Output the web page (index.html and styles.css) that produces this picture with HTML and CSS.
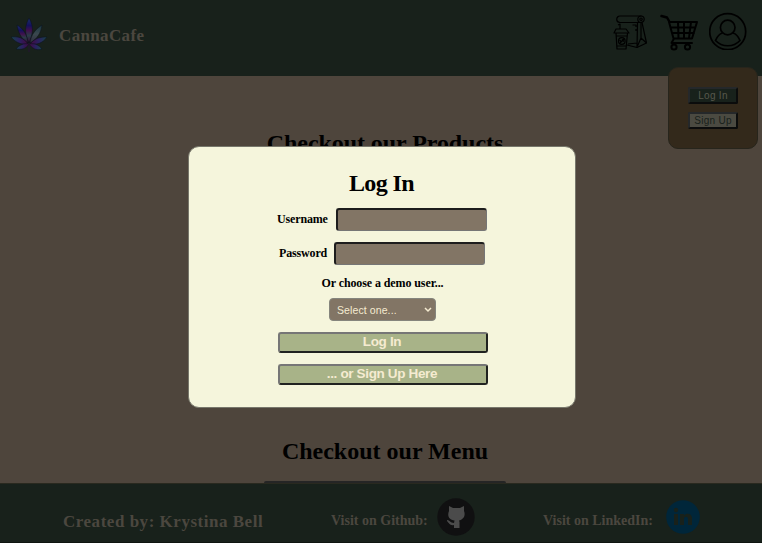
FILE: index.html
```html
<!DOCTYPE html>
<html lang="en">
<head>
<meta charset="utf-8">
<title>CannaCafe</title>
<link rel="stylesheet" href="styles.css">
</head>
<body>
<div class="page">
  <header class="header">
    <div class="brand">
      <svg class="leaf" viewBox="0 0 40 38" width="40" height="38">
        <defs>
          <linearGradient id="petal" x1="0" y1="0" x2="0" y2="1"><stop offset="0" stop-color="#1b2f67"/><stop offset=".3" stop-color="#14115c"/><stop offset=".5" stop-color="#40104d"/><stop offset=".7" stop-color="#2b3b47"/><stop offset="1" stop-color="#36083a"/></linearGradient>
          <linearGradient id="pale" x1="0" y1="0" x2="0" y2="1"><stop offset="0" stop-color="#173641"/><stop offset=".5" stop-color="#3b484e"/><stop offset="1" stop-color="#2d2b3b"/></linearGradient>
          <linearGradient id="tip" x1="0" y1="0" x2="1" y2="0"><stop offset="0" stop-color="#184348"/><stop offset=".5" stop-color="#2a2060"/><stop offset="1" stop-color="#43083e"/></linearGradient>
          <linearGradient id="tip-right" x1="1" y1="0" x2="0" y2="0"><stop offset="0" stop-color="#184348"/><stop offset=".5" stop-color="#2a2060"/><stop offset="1" stop-color="#43083e"/></linearGradient>
        </defs>
        <g stroke="#0b101d" stroke-width=".5">
          <path fill="url(#petal)" d="M20 27C15 17 16 9 20 2C25 10 24 18 20 27Z"/>
          <path fill="url(#petal)" d="M19 27C11 22 9 15 8 9C15 13 18 19 19 27Z"/>
          <path fill="url(#pale)" d="M21 27C22 18 27 13 33 9C32 17 28 23 21 27Z"/>
          <path fill="url(#tip)" d="M19 28C12 29 6 26 2 21C9 20 15 22 19 28Z"/>
          <path fill="url(#tip-right)" d="M21 28C26 22 31 21 38 21C34 27 28 29 21 28Z"/>
          <path fill="url(#tip)" d="M20 28C17 33 12 34 7 33C10 29 15 27 20 28Z"/>
          <path fill="url(#tip-right)" d="M20 28C26 27 30 29 33 33C27 35 23 32 20 28Z"/>
        </g>
        <path d="M20 27V36" stroke="#241535" stroke-width="1"/>
      </svg>
      <span class="brand-name">CannaCafe</span>
    </div>
    <nav class="nav">
      <svg width="36" height="36" viewBox="0 0 36 36" fill="none" stroke="#000" stroke-width="1.200" stroke-linejoin="round">
        <path d="M7 1H28.500M7 7.500H28.500M7 1A3.250 3.250 0 0 0 7 7.500M29 7.500L33.500 28L24 32.500L14 30"/>
        <circle cx="28" cy="4.200" r="3.200"/><circle cx="28" cy="4.200" r="1.200"/>
        <path d="M24.500 7.500L24 32.500M28 7.500L28 23L33.500 28M28 23L24.500 31M15 29L24 28M19.500 10H23V12M23 14V16M7 14V9L5 10"/>
        <path d="M3 14H13L16 18H1ZM3 18L4 34H13L14.500 18M3 21H14M4 31H13.500"/>
        <circle cx="8.800" cy="26" r="3.300"/><path d="M7 28L11 24M6.500 25L8.500 27M9 24.500L11 26.500"/>
      </svg>
      <svg width="40" height="37" viewBox="0 0 40 37" fill="none" stroke="#000" stroke-width="2" stroke-linejoin="round" stroke-linecap="round">
        <path d="M1.500 2L7 3.500L9 7" stroke-width="2.500"/>
        <path d="M9 8L13.500 24.500H32L37 8H10M11 13.500H35M12.500 19H34M18 8L18.500 24M24 8V24M31 8L29 24M14 24.500L11.500 29H32"/>
        <circle cx="14" cy="33" r="2.600"/><circle cx="27.500" cy="33" r="2.600"/>
      </svg>
      <svg width="38" height="38" viewBox="0 0 38 38" fill="none" stroke="#000" stroke-width="1.700">
        <circle cx="18.700" cy="19.700" r="18"/><circle cx="18.700" cy="15.500" r="7.300"/>
        <path d="M13.500 21C10 22 8 25 6.500 28.500C13 35.500 24.500 35.500 31 28.500C29.500 25 27.500 22 24 21"/>
      </svg>
    </nav>
    <div class="account">
      <button class="account-login">Log In</button>
      <button class="account-signup">Sign Up</button>
    </div>
  </header>
  <main class="main">
    <h2 class="products"><span>Checkout our Products</span></h2>
    <h2 class="menu"><span>Checkout our Menu</span></h2>
    <div class="menu-card"></div>
  </main>
  <footer class="footer">
    <span class="creator">Created by: Krystina Bell</span>
    <span class="visit github-label">Visit on Github:</span>
    <svg class="github" width="38" height="38" viewBox="0 0 38 38">
      <circle cx="19" cy="19" r="18.700" fill="#101011"/>
      <path fill="#4b4b4b" d="M12 8L16 10H23L27 8V13C29 18 26 22 22 22.500L22.500 24V30H17V27C13 28 12 25 10 23V22C13 22 13 25 17 25L17.500 22.500C12 22 10 18 12 13Z"/>
    </svg>
    <span class="visit linkedin-label">Visit on LinkedIn:</span>
    <svg class="linkedin" width="34" height="34" viewBox="0 0 34 34">
      <circle cx="17" cy="17" r="16.800" fill="#00263a"/>
      <g fill="#18211b"><circle cx="10" cy="10" r="2.200"/><path d="M8 14H12V25H8ZM14 14H18V15.500C20 12.500 26 13 26 18V25H22V19C22 16 18 16 18 19V25H14Z"/></g>
    </svg>
  </footer>
</div>
<div class="overlay">
  <form class="modal">
    <h1 class="title"><span>Log In</span></h1>
    <label class="field username"><span class="label">Username</span><input type="text"></label>
    <label class="field password"><span class="label">Password</span><input type="password"></label>
    <p class="hint">Or choose a demo user...</p>
    <div class="select"><span>Select one...</span>
      <svg width="8" height="6" viewBox="0 0 8 6"><path d="M1 1L4 4L7 1" fill="none" stroke="#f5ebd1" stroke-width="1.500"/></svg>
    </div>
    <button type="button" class="action"><span>Log In</span></button>
    <button type="button" class="action"><span>... or Sign Up Here</span></button>
  </form>
</div>
</body>
</html>
```
FILE: styles.css
```css
* { box-sizing: border-box; }
body { margin: 0; overflow: hidden; font-family: "Liberation Serif", serif; }
h1, h2, p { margin: 0; white-space: nowrap; }
.page { width: 762px; height: 543px; display: flex; flex-direction: column; background: #4e453c; }
.header { position: relative; height: 76px; flex: none; display: flex; justify-content: space-between; padding: 12px 15px 0 9px; background: #18211b; }
.brand { display: flex; gap: 10px; }
.leaf { margin-top: 4px; }
.brand-name { margin-top: 14px; font-size: 17px; line-height: 20px; font-weight: bold; letter-spacing: .35px; color: #4b473f; }
.nav { display: flex; gap: 9px; }
.nav svg:first-child { margin: 3px 2px 0 0; }
.nav svg:nth-child(2) { margin-top: 2px; }
.account { position: absolute; left: 668px; top: 67px; width: 90px; height: 82px; display: flex; flex-direction: column; align-items: center; gap: 8px; padding-top: 19px; border: 1px solid #27251c; border-radius: 10px; background: #33291b; }
.account button { width: 50px; height: 17px; padding: 0; border: 2px solid; border-color: #25282a #0b0c0c #0b0c0c #25282a; border-radius: 2px; font: 10px/14px "Liberation Sans", sans-serif; letter-spacing: .3px; white-space: nowrap; }
.account .account-login { background: #18211b; color: #57584c; }
.account .account-signup { background: #4b4a41; color: #18211b; }
.main { height: 407px; flex: none; display: flex; flex-direction: column; align-items: center; color: #000; }
.main h2 { font-size: 24px; line-height: 28px; }
.products { margin-top: 53px; padding-left: 8px; letter-spacing: -.07px; }
.menu { margin-top: 280px; padding-left: 8px; }
.menu-card { width: 242px; height: 3px; margin: 16px 0 0 8px; border-radius: 3px 3px 0 0; background: #252525; }
.footer { height: 60px; flex: none; display: flex; padding-left: 63px; border-top: 1px solid #29291f; border-bottom: 1px solid #0e1510; background: #18211b; color: #4b473f; font-weight: bold; white-space: nowrap; }
.creator { width: 268px; padding-top: 28px; font-size: 17px; line-height: 20px; letter-spacing: .52px; }
.visit { padding-top: 27px; font-size: 14px; line-height: 20px; }
.github-label { width: 106px; }
.github { margin-top: 14px; }
.linkedin-label { width: 123px; margin-left: 68px; }
.linkedin { margin-top: 16px; }
.overlay { position: absolute; inset: 0; padding: 146px 0 0 188px; }
.modal { width: 388px; height: 262px; padding: 22px 88px 0; display: flex; flex-direction: column; border: 1px solid #77776b; border-radius: 11px; background: #f5f5dc; color: #000; }
.title { padding-right: 1px; text-align: center; font-size: 24px; line-height: 28px; letter-spacing: -.6px; }
.field { display: flex; align-items: center; height: 22px; font-size: 12px; font-weight: bold; }
.username { margin: 11px 0 0; }
.password { margin: 12px 0 0 2px; }
.label { width: 59px; white-space: nowrap; letter-spacing: -.15px; }
.password .label { width: 55px; }
.field input { width: 151px; height: 23px; margin: 0; padding: 0; border: 1px solid; border-width: 2px 1px 1px 2px; border-color: #1d1d1d #767676 #767676 #1d1d1d; border-radius: 3px; background: #827565; }
.hint { margin-top: 10px; padding-left: 1px; text-align: center; font-size: 12px; line-height: 18px; font-weight: bold; letter-spacing: -.1px; }
.select { width: 107px; height: 23px; margin: 6px 0 0 52px; padding: 0 3px 0 7px; display: flex; align-items: center; justify-content: space-between; border: 1px solid #85857d; border-radius: 4px; background: #827565; color: #f5ebd1; font: 10.500px "Liberation Sans", sans-serif; letter-spacing: .1px; white-space: nowrap; }
.action { width: 210px; height: 21px; margin: 11px 0 0 1px; padding: 0 2px 1px 0; border: 2px solid; border-color: #767676 #202220 #202220 #767676; border-radius: 3px; background: #a8b388; color: #f5ebd1; font: bold 13.500px/16px "Liberation Sans", sans-serif; letter-spacing: -.35px; white-space: nowrap; }
```
